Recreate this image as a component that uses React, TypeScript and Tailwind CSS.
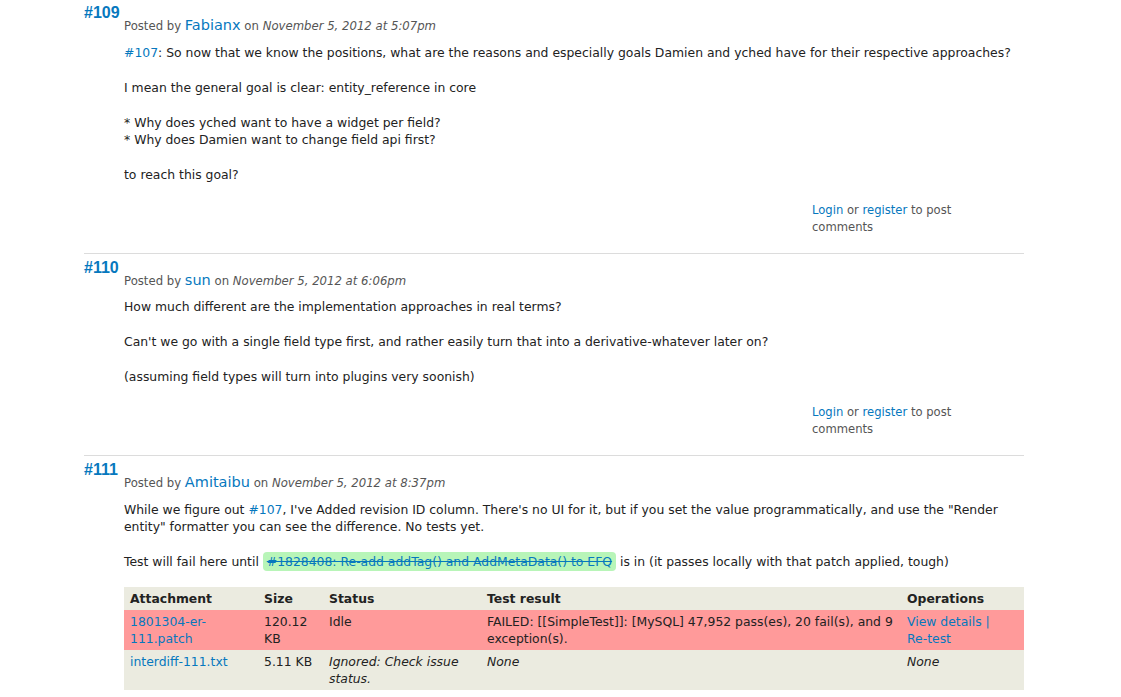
import React from "react";

const link = "text-[#0678be] no-underline";

type Row = {
  bg: string;
  file: string;
  size: string;
  status: React.ReactNode;
  result: React.ReactNode;
  ops: React.ReactNode;
};

function LoginBlock() {
  return (
    <div className="mt-[19px] ml-[688px] w-[148px] text-[11.6px] leading-[17px] text-[#555]">
      <a className={link}>Login</a> or <a className={link}>register</a> to post comments
    </div>
  );
}

function Comment(props: { num: string; user: string; date: string; first?: boolean; children: React.ReactNode }) {
  return (
    <div className={props.first ? "pb-[17px]" : "border-t border-[#dcdcdc] pt-px pb-[17px]"}>
      <div className="h-[16px] pt-[5px] leading-[16px] text-[16px] font-bold text-[#0678be] font-['Liberation_Sans',Arial,sans-serif]">
        {props.num}
      </div>
      <div className="ml-[40px]">
        <div className="leading-[18px] text-[11.7px] text-[#555]">
          Posted by <a className={link + " text-[14.5px]"}>{props.user}</a> on <em>{props.date}</em>
        </div>
        <div className="mt-[8.5px] text-[12.4px] leading-[17px] text-[#222] flex flex-col gap-[18px]">
          {props.children}
        </div>
        <LoginBlock />
      </div>
    </div>
  );
}

function AttachTable() {
  const rows: Row[] = [
    {
      bg: "bg-[#ff9a9a]",
      file: "1801304-er-111.patch",
      size: "120.12 KB",
      status: "Idle",
      result: "FAILED: [[SimpleTest]]: [MySQL] 47,952 pass(es), 20 fail(s), and 9 exception(s).",
      ops: (
        <>
          <a className={link}>View details</a> <span className="text-[#0678be]">|</span>{" "}
          <a className={link + " whitespace-nowrap"}>Re-test</a>
        </>
      ),
    },
    {
      bg: "bg-[#ebebe0]",
      file: "interdiff-111.txt",
      size: "5.11 KB",
      status: <em>Ignored: Check issue status.</em>,
      result: <em>None</em>,
      ops: <em>None</em>,
    },
  ];
  return (
    <table className="w-[900px] -mt-px text-[12.4px] leading-[17px] text-[#222] border-collapse table-fixed">
      <colgroup>
        <col className="w-[134px]" />
        <col className="w-[65px]" />
        <col className="w-[158px]" />
        <col className="w-[420px]" />
        <col className="w-[123px]" />
      </colgroup>
      <thead>
        <tr className="bg-[#ebebe0] text-left">
          <th className="px-[6px] pt-[3px] pb-[3px] font-bold">Attachment</th>
          <th className="px-[6px] pt-[3px] pb-[3px] font-bold">Size</th>
          <th className="px-[6px] pt-[3px] pb-[3px] font-bold">Status</th>
          <th className="px-[6px] pt-[3px] pb-[3px] font-bold">Test result</th>
          <th className="px-[6px] pt-[3px] pb-[3px] font-bold">Operations</th>
        </tr>
      </thead>
      <tbody>
        {rows.map((r, i) => (
          <tr className={r.bg + " align-top"} key={i}>
            <td className="px-[6px] py-[3px]"><a className={link}>{r.file}</a></td>
            <td className="px-[6px] py-[3px]">{r.size}</td>
            <td className="px-[6px] py-[3px]">{r.status}</td>
            <td className="px-[6px] py-[3px]">{r.result}</td>
            <td className="px-[6px] py-[3px]">{r.ops}</td>
          </tr>
        ))}
      </tbody>
    </table>
  );
}

export default function App() {
  return (
    <div className="bg-white w-[1121px] h-[697px] overflow-hidden font-['DejaVu_Sans',sans-serif]">
      <div className="ml-[84px] w-[940px]">
        <Comment num="#109" user="Fabianx" date="November 5, 2012 at 5:07pm" first>
          <p><a className={link}>#107</a>: So now that we know the positions, what are the reasons and especially goals Damien and yched have for their respective approaches?</p>
          <p>I mean the general goal is clear: entity_reference in core</p>
          <p>
            * Why does yched want to have a widget per field?
            <br />* Why does Damien want to change field api first?
          </p>
          <p>to reach this goal?</p>
        </Comment>
        <Comment num="#110" user="sun" date="November 5, 2012 at 6:06pm">
          <p>How much different are the implementation approaches in real terms?</p>
          <p>Can't we go with a single field type first, and rather easily turn that into a derivative-whatever later on?</p>
          <p>(assuming field types will turn into plugins very soonish)</p>
        </Comment>
        <Comment num="#111" user="Amitaibu" date="November 5, 2012 at 8:37pm">
          <p>
            While we figure out <a className={link}>#107</a>, I've Added revision ID column. There's no UI for it, but if you set the value programmatically, and use the "Render entity" formatter you can see the difference. No tests yet.
          </p>
          <p>
            Test will fail here until{" "}
            <span className="bg-[#b8f5b8] rounded-[4px] px-[4px] py-[2px]">
              <a className="text-[#0678be] line-through">#1828408: Re-add addTag() and AddMetaData() to EFQ</a>
            </span>{" "}
            is in (it passes locally with that patch applied, tough)
          </p>
          <AttachTable />
        </Comment>
      </div>
    </div>
  );
}
